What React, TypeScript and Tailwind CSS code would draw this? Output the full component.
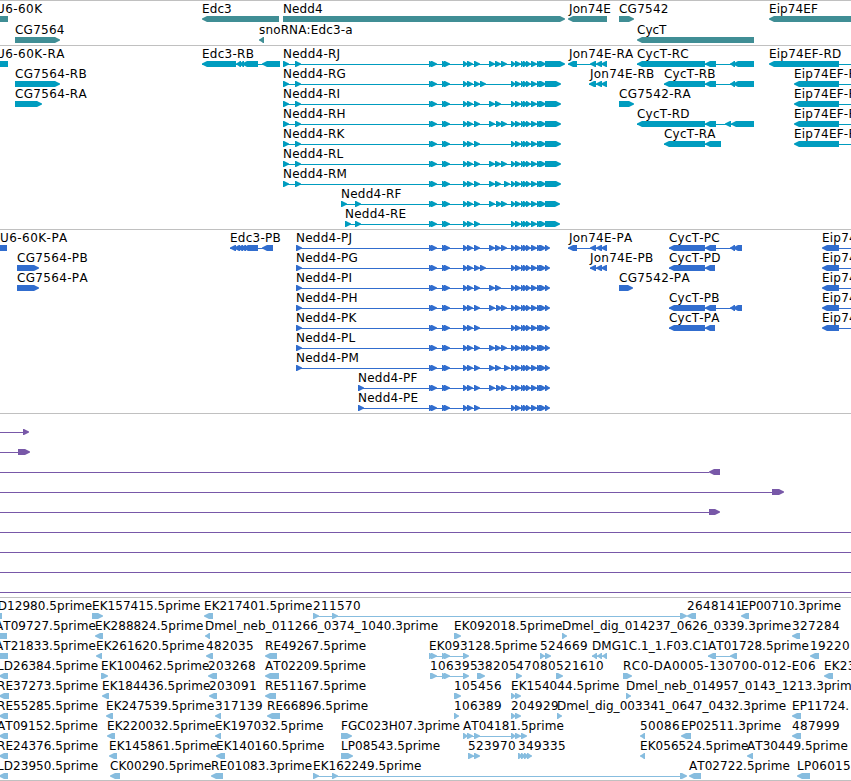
type Seg = [number, number];

interface Feature {
  label?: string;
  x?: number;
  dir?: "l" | "r" | "n"; // strand, n = no arrow head inside the view
  segs?: Seg[];
  line?: Seg;
}

const VIEW = 851;

// label, start, strand, exons, optional connector
const f = (label: string, x: number, dir: "l" | "r" | "n", segs: Seg[], line?: Seg): Feature => ({ label, x, dir, segs, line });

// exons shared by all Nedd4 isoforms
const left: Seg[] = [[429, 434], [431, 437], [442, 447], [444, 450], [463, 468], [467, 473], [474, 480]];
const right: Seg[] = [[511, 516], [515, 521], [521, 525], [523, 528], [526, 531], [531, 537], [537, 542], [539, 546]];

const nedd4 = (label: string, x: number, first: number[], mid: number[], end: number): Feature => ({
  label,
  x,
  dir: "r",
  segs: [
    ...first.map((s): Seg => [s, s + 6]),
    ...left,
    ...mid.map((s): Seg => [s, s + 6]),
    ...right,
    [545, end],
  ],
});

const genes: Feature[][] = [
  [
    f("U6-60K", -4, "n", [[0, 8]]),
    f("Edc3", 202, "l", [[202, 279]]),
    f("Nedd4", 283, "r", [[283, 565]]),
    f("Jon74E", 569, "l", [[568, 607]]),
    f("CG7542", 619, "r", [[619, 634]]),
    f("Eip74EF", 769, "l", [[769, 860]]),
  ],
  [
    f("CG7564", 15, "r", [[15, 60]]),
    f("snoRNA:Edc3-a", 259, "l", [[259, 264]]),
    f("CycT", 637, "l", [[637, 754]]),
  ],
];

const transcripts: Feature[][] = [
  [
    f("U6-60K-RA", -4, "n", [[0, 8]]),
    f("Edc3-RB", 202, "l", [[202, 236], [236, 241], [239, 244], [242, 258], [262, 280]]),
    nedd4("Nedd4-RJ", 283, [283, 295], [489, 495, 501], 565),
    f("Jon74E-RA", 569, "l", [[568, 577], [590, 596], [596, 602], [601, 607]]),
    f("CycT-RC", 637, "l", [[637, 705], [705, 716], [730, 735], [733, 754]]),
    f("Eip74EF-RD", 769, "l", [[769, 839]], [839, VIEW]),
  ],
  [
    f("CG7564-RB", 15, "r", [[15, 60]]),
    nedd4("Nedd4-RG", 283, [283, 295], [480], 561),
    f("Jon74E-RB", 590, "l", [[589, 596], [596, 602], [601, 607]]),
    f("CycT-RB", 664, "l", [[664, 705], [705, 716], [730, 735], [733, 754]]),
    f("Eip74EF-RC", 794, "l", [[794, 839]], [839, VIEW]),
  ],
  [
    f("CG7564-RA", 15, "r", [[15, 42]]),
    nedd4("Nedd4-RI", 283, [283, 295], [489, 495], 561),
    f("CG7542-RA", 619, "r", [[619, 634]]),
    f("Eip74EF-RB", 794, "l", [[794, 839]], [839, VIEW]),
  ],
  [
    nedd4("Nedd4-RH", 283, [283, 295], [489, 496, 501], 561),
    f("CycT-RD", 637, "l", [[637, 705], [705, 716], [725, 731], [731, 754]]),
    f("Eip74EF-RA", 794, "l", [[794, 839]], [839, VIEW]),
  ],
  [
    nedd4("Nedd4-RK", 283, [283, 295], [], 561),
    f("CycT-RA", 664, "l", [[664, 705], [705, 721]]),
    f("Eip74EF-RE", 794, "l", [[794, 839]], [839, VIEW]),
  ],
  [nedd4("Nedd4-RL", 283, [283, 295], [489, 495, 501], 561)],
  [nedd4("Nedd4-RM", 283, [283, 295], [489, 495, 504], 561)],
  [nedd4("Nedd4-RF", 341, [341, 355], [489, 496, 501], 560)],
  [nedd4("Nedd4-RE", 345, [345, 355], [], 560)],
];

const proteins: Feature[][] = [
  [
    f("U6-60K-PA", 0, "n", [[0, 7]]),
    f("Edc3-PB", 230, "l", [[230, 236], [234, 240], [237, 243], [240, 246], [243, 258], [262, 273]]),
    nedd4("Nedd4-PJ", 296, [296], [489, 495, 501], 550),
    f("Jon74E-PA", 569, "l", [[568, 577], [590, 596], [596, 602], [601, 607]]),
    f("CycT-PC", 669, "l", [[669, 705], [705, 716], [730, 735], [733, 742]]),
    f("Eip74EF-PD", 822, "l", [[822, 839]], [839, VIEW]),
  ],
  [
    f("CG7564-PB", 17, "r", [[17, 39]]),
    nedd4("Nedd4-PG", 296, [296], [480], 550),
    f("Jon74E-PB", 590, "l", [[590, 596], [596, 602], [601, 607]]),
    f("CycT-PD", 669, "l", [[669, 705], [705, 715]]),
    f("Eip74EF-PC", 822, "l", [[822, 839]], [839, VIEW]),
  ],
  [
    f("CG7564-PA", 17, "r", [[17, 39]]),
    nedd4("Nedd4-PI", 296, [296], [489, 495], 550),
    f("CG7542-PA", 619, "r", [[619, 633]]),
    f("Eip74EF-PB", 822, "l", [[822, 839]], [839, VIEW]),
  ],
  [
    nedd4("Nedd4-PH", 296, [296], [489, 496, 501], 550),
    f("CycT-PB", 669, "l", [[669, 705], [705, 716], [730, 735], [733, 742]]),
    f("Eip74EF-PA", 822, "l", [[822, 839]], [839, VIEW]),
  ],
  [
    nedd4("Nedd4-PK", 296, [296], [], 550),
    f("CycT-PA", 669, "l", [[669, 705], [705, 715]]),
    f("Eip74EF-PE", 822, "l", [[822, 839]], [839, VIEW]),
  ],
  [nedd4("Nedd4-PL", 296, [296], [489, 495, 501], 550)],
  [nedd4("Nedd4-PM", 296, [296], [489, 495, 504], 550)],
  [nedd4("Nedd4-PF", 358, [358], [489, 496, 501], 550)],
  [nedd4("Nedd4-PE", 358, [358], [], 550)],
];

const spans: Feature[][] = [
  [{ dir: "r", segs: [[23, 29]], line: [0, 23] }],
  [{ dir: "r", segs: [[18, 30]], line: [0, 18] }],
  [{ dir: "l", segs: [[709, 720]], line: [0, 709] }],
  [{ dir: "r", segs: [[772, 784]], line: [0, 772] }],
  [{ dir: "r", segs: [[709, 720]], line: [0, 709] }],
  [{ line: [0, VIEW] }],
  [{ line: [0, VIEW] }],
  [{ line: [0, VIEW] }],
  [{ line: [0, VIEW] }],
];

const ests: Feature[][] = [
  [
    f("LD12980.5prime", -9, "n", [[0, 2]]),
    f("EK157415.5prime", 92, "r", [[92, 103]]),
    f("EK217401.5prime", 204, "l", [[204, 213]]),
    f("211570", 313, "r", [[313, 319], [332, 338], [680, 687]]),
    f("2648141", 687, "l", [[687, 696]]),
    f("EP00710.3prime", 741, "l", [[741, 749]]),
  ],
  [
    f("AT09727.5prime", -5, "n", [[0, 7]]),
    f("EK288824.5prime", 95, "l", [[95, 103]]),
    f("Dmel_neb_011266_0374_1040.3prime", 205, "l", [[205, 210]]),
    f("EK092018.5prime", 454, "r", [[454, 461]]),
    f("Dmel_dig_014237_0626_0339.3prime", 562, "r", [[562, 567]]),
    f("327284", 792, "l", [[792, 800]]),
  ],
  [
    f("AT21833.5prime", -5, "n", [[0, 8]]),
    f("EK261620.5prime", 96, "l", [[96, 102]]),
    f("482035", 206, "l", [[206, 213]]),
    f("RE49267.5prime", 265, "l", [[265, 277]]),
    f("EK093128.5prime", 429, "r", [[429, 434], [431, 437], [442, 447], [444, 450], [463, 469]]),
    f("524669", 540, "r", [[540, 545], [545, 551]]),
    f("DMG1C.1_1.F03.C1", 592, "l", [[592, 597], [597, 602], [602, 607]]),
    f("AT01728.5prime", 708, "l", [[708, 716], [730, 737]]),
    f("19220", 810, "l", [[810, 819]]),
  ],
  [
    f("LD26384.5prime", -3, "l", [[-1, 8]]),
    f("EK100462.5prime", 101, "r", [[101, 108]]),
    f("203268", 208, "l", [[208, 217]]),
    f("AT02209.5prime", 265, "l", [[265, 279]]),
    f("106395", 430, "r", [[430, 437], [442, 447], [444, 450], [463, 469]]),
    f("38205", 477, "r", [[477, 485]]),
    f("47080", 516, "r", [[516, 522]]),
    f("521610", 556, "r", [[556, 563]]),
    f("RC0-DA0005-130700-012-E06", 623, "r", [[623, 632]]),
    f("EK23", 824, "l", [[824, 833]]),
  ],
  [
    f("RE37273.5prime", -3, "l", [[-1, 9]]),
    f("EK184436.5prime", 102, "l", [[102, 109]]),
    f("203091", 209, "l", [[209, 217]]),
    f("RE51167.5prime", 265, "l", [[265, 276]]),
    f("105456", 454, "r", [[454, 461]]),
    f("EK154044.5prime", 511, "r", [[511, 516], [515, 521]]),
    f("Dmel_neb_014957_0143_1213.3prime", 626, "r", [[626, 631]]),
  ],
  [
    f("RE55285.5prime", -3, "l", [[-1, 8]]),
    f("EK247539.5prime", 106, "l", [[106, 113]]),
    f("317139", 215, "l", [[215, 221]]),
    f("RE66896.5prime", 267, "l", [[267, 280]]),
    f("106389", 454, "r", [[454, 459]]),
    f("204929", 511, "r", [[511, 516], [515, 521]]),
    f("Dmel_dig_003341_0647_0432.3prime", 557, "r", [[557, 562]]),
    f("EP11724.", 792, "l", [[792, 801]]),
  ],
  [
    f("AT09152.5prime", -3, "l", [[-1, 8]]),
    f("EK220032.5prime", 107, "l", [[107, 115]]),
    f("EK197032.5prime", 215, "l", [[215, 221]]),
    f("FGC023H07.3prime", 341, "r", [[341, 352]]),
    f("AT04181.5prime", 463, "r", [[463, 468], [467, 473], [474, 480], [511, 516], [515, 521], [521, 527]]),
    f("50086", 640, "l", [[640, 645]]),
    f("EP02511.3prime", 681, "l", [[681, 691]]),
    f("487999", 792, "l", [[792, 801]]),
  ],
  [
    f("RE24376.5prime", -3, "l", [[-1, 8]]),
    f("EK145861.5prime", 109, "l", [[109, 117]]),
    f("EK140160.5prime", 216, "l", [[216, 225]]),
    f("LP08543.5prime", 341, "r", [[341, 353]]),
    f("523970", 468, "r", [[468, 474], [474, 480]]),
    f("349335", 518, "r", [[518, 523], [521, 526], [524, 529], [527, 532]]),
    f("EK056524.5prime", 640, "l", [[640, 645]]),
    f("AT30449.5prime", 747, "l", [[747, 753]]),
  ],
  [
    f("LD23950.5prime", -3, "l", [[-1, 8]]),
    f("CK00290.5prime", 110, "l", [[110, 120]]),
    f("RE01083.3prime", 211, "l", [[211, 223]]),
    f("EK162249.5prime", 313, "r", [[313, 319], [332, 338], [680, 687]]),
    f("AT02722.5prime", 689, "l", [[689, 701]]),
    f("LP06015", 797, "l", [[797, 810]]),
  ],
];

function exonPoints([a, b]: Seg, dir?: string) {
  if (dir === "n") return `${a},0 ${b},0 ${b},6 ${a},6`;
  const head = Math.min(5, b - a - 1);
  if (dir === "l") return `${a},2.5 ${a + 2},1.4 ${a + head},0 ${b},0 ${b},6 ${a + head},6 ${a + 2},4.6 ${a},3.5`;
  return `${a},0 ${b - head},0 ${b - 2},1.6 ${b},2.5 ${b},3.4 ${b - 2},4.4 ${b - head},6 ${a},6`;
}

function tracking(label: string) {
  if (label.includes(".")) return 0.05;
  const digits = label.replace(/\D/g, "").length;
  const hyphens = label.split("-").length - 1;
  return (digits * 0.36 + hyphens * 1.5) / label.length;
}

function Glyph({ feature }: { feature: Feature }) {
  const segs = feature.segs ?? [];
  const line = feature.line ?? (segs.length > 1 ? [segs[0][0], segs[segs.length - 1][1] - 1] : null);
  return (
    <g>
      {line && <rect x={line[0]} y={3} width={line[1] - line[0]} height={1} />}
      {segs.map((s, i) => (
        <polygon key={i} points={exonPoints(s, feature.dir)} />
      ))}
    </g>
  );
}

function Track({ rows, className }: { rows: Feature[][]; className: string }) {
  return (
    <section className={`flex flex-col border-t border-[#c0c0c0] pt-px ${className}`}>
      {rows.map((row, i) => (
        <div key={i} className="flex h-5 shrink-0 flex-col">
          <div className="relative h-3.5 text-black">
            {row.map(
              (ft) =>
                ft.label && (
                  <span
                    key={ft.label}
                    className="absolute top-0 whitespace-nowrap"
                    style={{ left: ft.x, letterSpacing: tracking(ft.label) }}
                  >
                    {ft.label}
                  </span>
                )
            )}
          </div>
          <svg width={VIEW} height={6} className="block fill-current">
            {row.map((ft, j) => (
              <Glyph key={j} feature={ft} />
            ))}
          </svg>
        </div>
      ))}
    </section>
  );
}

export default function App() {
  return (
    <main className="h-[781px] w-[851px] overflow-hidden border-b border-[#c0c0c0] bg-white font-['DejaVu_Sans',sans-serif] text-[12px] leading-[14px] [font-kerning:none]">
      <Track rows={genes} className="gap-px pb-0.5 text-[#408e95]" />
      <Track rows={transcripts} className="pb-0.5 text-[#009cbf]" />
      <Track rows={proteins} className="pb-0.5 text-[#316dce]" />
      <Track rows={spans} className="pb-0.5 text-[#7858a8]" />
      <Track rows={ests} className="pb-px text-[#87bddf]" />
    </main>
  );
}
